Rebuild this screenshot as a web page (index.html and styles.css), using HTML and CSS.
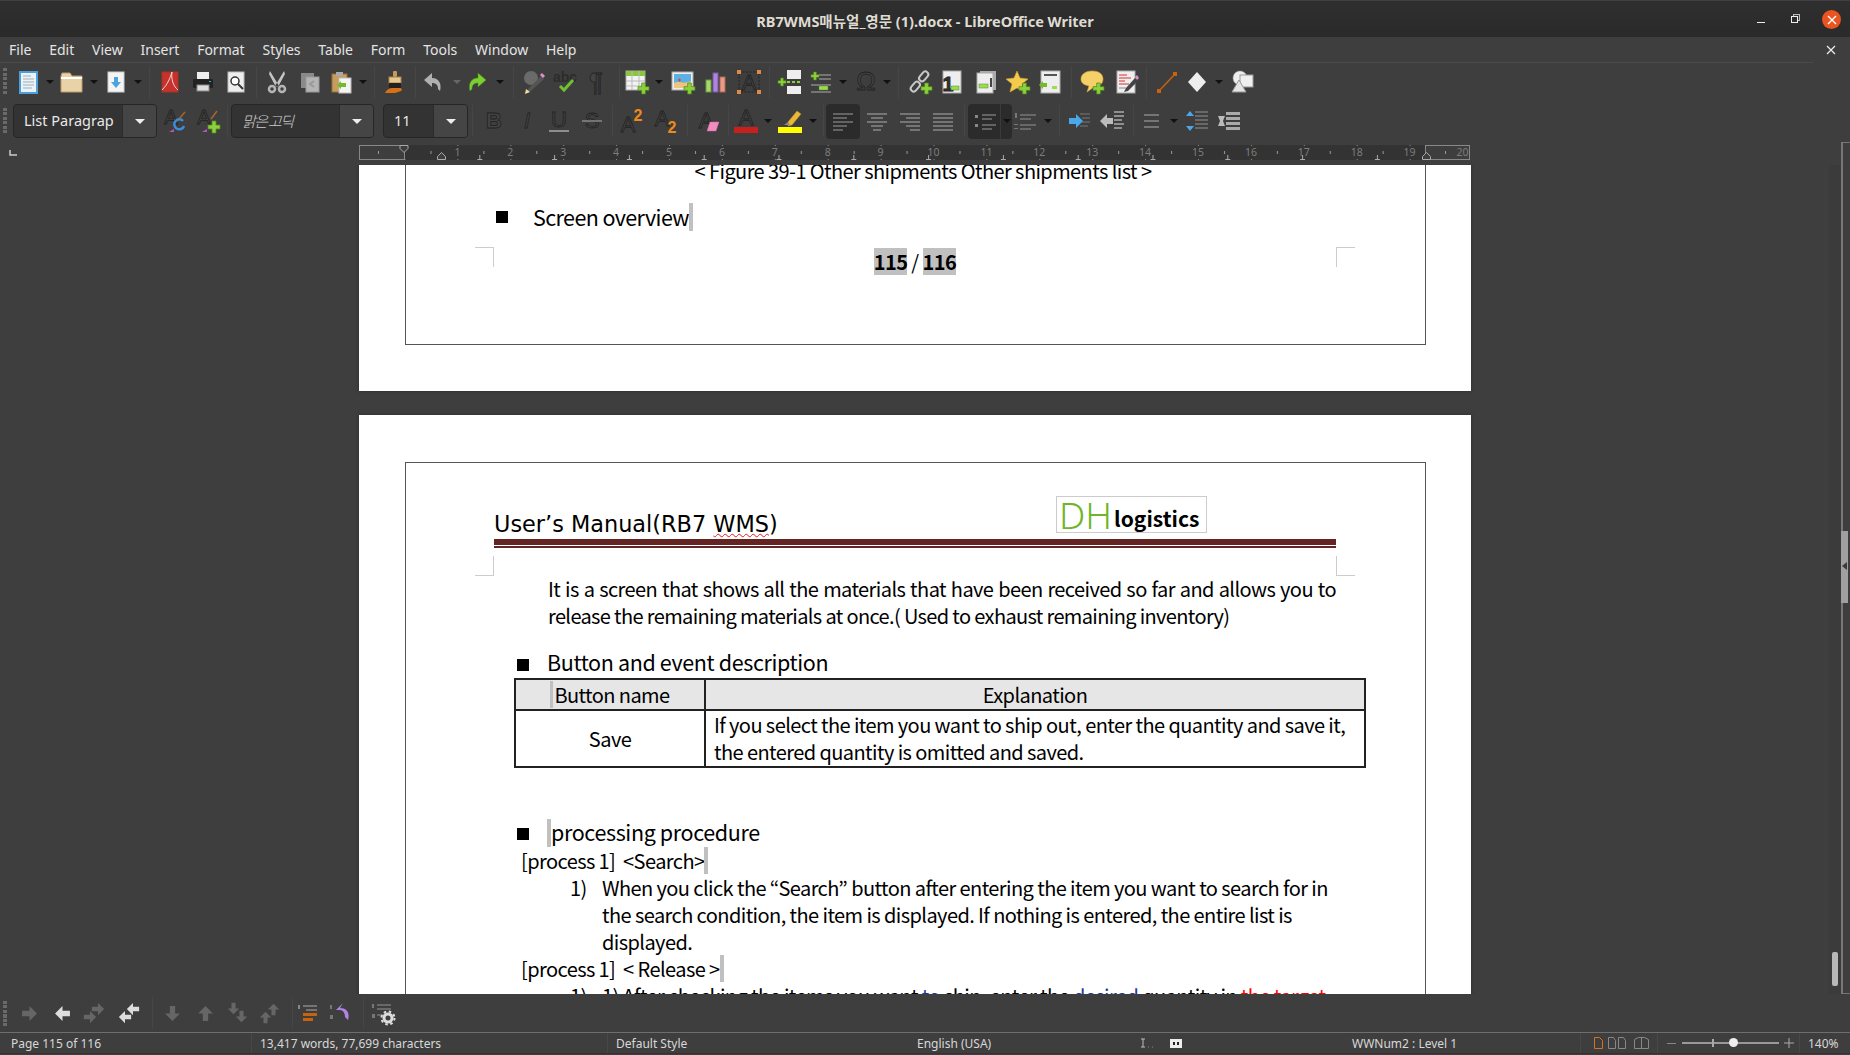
FILE: index.html
```
<!DOCTYPE html>
<html>
<head>
<meta charset="utf-8">
<title>RB7WMS매뉴얼_영문 (1).docx - LibreOffice Writer</title>
<link rel="stylesheet" href="styles.css">
</head>
<body>
<svg class="defs" width="0" height="0">
	<symbol id="plus" viewBox="0 0 12 12" overflow="visible"><path d="M4 0h4v4h4v4H8v4H4V8H0V4h4z" fill="#8cd03c" stroke="#4f8a1c" stroke-width=".8"/></symbol>
	<symbol id="arrow" viewBox="0 0 16 16"><path d="M8 1l7 7-7 7v-4.500H1v-5h7z"/></symbol>
</svg>

<div class="titlebar">
	<span class="title">RB7WMS매뉴얼_영문 (1).docx - LibreOffice Writer</span>
	<div class="winctl">
		<span class="win-min"></span>
		<span class="win-max"></span>
		<span class="win-close"><svg width="10" height="10" viewBox="0 0 10 10"><path d="M1 1l8 8M9 1l-8 8" stroke="#fff" stroke-width="1.400"/></svg></span>
	</div>
</div>

<div class="menubar">
	<div class="menus">
		<a>File</a><a>Edit</a><a>View</a><a>Insert</a><a>Format</a><a>Styles</a><a>Table</a><a>Form</a><a>Tools</a><a>Window</a><a>Help</a>
	</div>
	<svg class="menu-close" width="10" height="10" viewBox="0 0 10 10"><path d="M1 1l8 8M9 1l-8 8" stroke="#eee" stroke-width="1.200"/></svg>
</div>

<div class="toolbar row1">
	<span class="grip"></span>
	<span class="t w32"><svg class="ic" viewBox="0 0 24 24"><rect x="4" y="2" width="17" height="21" fill="#eaf3fa" stroke="#4d9fdc" stroke-width="2"/><path d="M7 6h8M7 9h11M7 12h11M7 15h11M7 18h9" stroke="#a5adb5"/></svg></span>
	<span class="dd w12"></span>
	<span class="t w32"><svg class="ic" viewBox="0 0 24 24"><path d="M1 6l1-3h8l2 3h10v16H1z" fill="#e9d2a8" stroke="#b89a68"/><path d="M1 8h21" stroke="#fff" stroke-width="2"/></svg></span>
	<span class="dd w12"></span>
	<span class="t w32"><svg class="ic" viewBox="0 0 24 24"><rect x="4" y="2" width="16" height="20" fill="#f4f4f4" stroke="#ccc"/><path d="M10 7h4v5h3l-5 6-5-6h3z" fill="#4aa3e0"/></svg></span>
	<span class="dd w12"></span>
	<span class="sep w10"></span>
	<span class="t w32"><svg class="ic" viewBox="0 0 24 24"><rect x="4" y="2" width="16" height="20" fill="#c8322c" stroke="#a32"/><path d="M14 2c-2 6-4 12-10 18M14 2c-1 7 1 14 6 18" fill="none" stroke="#f3d8d4"/></svg></span>
	<span class="t w34"><svg class="ic" viewBox="0 0 24 24"><rect x="6" y="2" width="12" height="7" fill="#eee"/><rect x="2" y="9" width="20" height="9" rx="1" fill="#222"/><rect x="6" y="15" width="12" height="6" fill="#ddd" stroke="#888"/><rect x="18" y="11" width="2" height="1" fill="#4ac"/></svg></span>
	<span class="t w32"><svg class="ic" viewBox="0 0 24 24"><rect x="4" y="2" width="16" height="20" fill="#eee" stroke="#bbb"/><circle cx="11" cy="11" r="4" fill="#fff" stroke="#333" stroke-width="1.500"/><path d="M14 14l5 5" stroke="#333" stroke-width="2"/></svg></span>
	<span class="sep w8"></span>
	<span class="t w34"><svg class="ic" viewBox="0 0 24 24"><g fill="none" stroke="#b5b5b5" stroke-width="2.500"><circle cx="7" cy="19" r="3"/><circle cx="17" cy="19" r="3"/></g><path d="M5 1l9 15-3 1L4 4zM19 1l-9 15 3 1 7-13z" fill="#c4c4c4"/></svg></span>
	<span class="t w32"><svg class="ic" viewBox="0 0 24 24"><rect x="3" y="3" width="13" height="15" fill="#8a8a8a"/><rect x="8" y="7" width="13" height="15" fill="#b4b4b4" stroke="#999"/><path d="M16 11l-4 3 4 3" fill="none" stroke="#999" stroke-width="2"/></svg></span>
	<span class="t w30"><svg class="ic" viewBox="0 0 24 24"><rect x="3" y="4" width="15" height="18" fill="#c79c5c" stroke="#96703a"/><rect x="7" y="2" width="7" height="4" fill="#aaa"/><rect x="10" y="8" width="12" height="15" fill="#f4f4f4" stroke="#bbb"/><path d="M8 15l4-4v2h5v4h-5v2z" fill="#76b82e"/></svg></span>
	<span class="dd w14"></span>
	<span class="sep w8"></span>
	<span class="t w34"><svg class="ic" viewBox="0 0 24 24"><rect x="10" y="1" width="4" height="6" rx="1" fill="#c89a58"/><rect x="6" y="7" width="12" height="6" fill="#e8c98c" stroke="#a8824a"/><rect x="6" y="13" width="12" height="5" fill="#222"/><path d="M2 23c2-4 5-5 8-5h8c1 2 1 3 0 3l-6 2z" fill="#d87014"/></svg></span>
	<span class="sep w6"></span>
	<span class="t w30"><svg class="ic" viewBox="0 0 24 24"><path d="M11 3L3 10l8 7v-4c4 0 6 2 6 6l2 2c2-7-1-13-8-13z" fill="#b0b0b0"/></svg></span>
	<span class="dd off w18"></span>
	<span class="t w22"><svg class="ic" viewBox="0 0 24 24"><path d="M13 3l8 7-8 7v-4c-4 0-6 2-6 6l-2 2C3 14 6 8 13 8z" fill="#7ccf30" stroke="#4f8a1c" stroke-width=".5"/></svg></span>
	<span class="dd w24"></span>
	<span class="sep w2"></span>
	<span class="t w40"><svg class="ic" viewBox="0 0 24 24"><circle cx="9" cy="8" r="7" fill="#6a6a6a"/><path d="M4 23l2-4L19 6l3 3L9 21z" fill="#555"/><path d="M18 5l2-2 3 3-2 2z" fill="#e090c8"/><path d="M3 24l1-5 4 3z" fill="#f0e0a0"/></svg></span>
	<span class="t w22"><svg class="ic" viewBox="0 0 24 24"><text x="12" y="12" class="abc">abc</text><path d="M7 16l4 4 9-10" fill="none" stroke="#70c030" stroke-width="3"/></svg></span>
	<span class="t w40"><svg class="ic" viewBox="0 0 24 24"><text x="12" y="21" class="glyph big">¶</text></svg></span>
	<span class="sep w6"></span>
	<span class="t w30"><svg class="ic" viewBox="0 0 24 24"><rect x="1" y="1" width="19" height="19" fill="#f2f2f2" stroke="#aaa"/><rect x="1" y="1" width="19" height="5" fill="#8cc63e"/><path d="M7 1v19M14 1v19M1 11h19M1 16h19" stroke="#bbb"/><use href="#plus" x="13" y="13" width="11" height="11"/></svg></span>
	<span class="dd w14"></span>
	<span class="t w34"><svg class="ic" viewBox="0 0 24 24"><rect x="1" y="2" width="21" height="18" fill="#eee" stroke="#aaa"/><rect x="3" y="4" width="17" height="14" fill="#5cb0e4"/><path d="M3 18v-5c5-3 8 2 17-2v7z" fill="#f0c47c"/><path d="M7 10h3M8.500 8.500v3" stroke="#e0402c"/><use href="#plus" x="13" y="13" width="11" height="11"/></svg></span>
	<span class="t w32"><svg class="ic" viewBox="0 0 24 24"><rect x="2" y="10" width="5" height="12" fill="#a5d86a" stroke="#6a9a3a"/><rect x="9" y="3" width="5" height="19" fill="#ad85de" stroke="#7a58a8"/><rect x="16" y="7" width="5" height="15" fill="#e89a84" stroke="#a86a58"/></svg></span>
	<span class="t w34"><svg class="ic" viewBox="0 0 24 24"><rect x="2" y="2" width="20" height="20" fill="none" stroke="#222" stroke-dasharray="2 1.500"/><text x="12" y="20" class="glyph">A</text><path d="M0 0h4v4H0zM20 0h4v4h-4zM0 20h4v4H0zM20 20h4v4h-4z" fill="#e08848"/></svg></span>
	<span class="sep w6"></span>
	<span class="t w36"><svg class="ic" viewBox="0 0 24 24"><rect x="9" y="0" width="14" height="9" fill="#eee"/><rect x="9" y="16" width="14" height="8" fill="#eee"/><path d="M9 12h14" stroke="#8cd03c" stroke-width="2" stroke-dasharray="3 2"/><use href="#plus" x="0" y="8" width="8" height="8"/></svg></span>
	<span class="t w26"><svg class="ic" viewBox="0 0 24 24"><path d="M10 5h12M10 9h12M2 15h20M2 22h20" stroke="#888" stroke-width="1.500"/><use href="#plus" x="2" y="2" width="8" height="8"/><rect x="10" y="16" width="9" height="4" fill="#9cdc50" stroke="#5a8a2a" stroke-width=".5"/></svg></span>
	<span class="dd w18"></span>
	<span class="t w28"><svg class="ic" viewBox="0 0 24 24"><text x="12" y="20" class="glyph big">Ω</text></svg></span>
	<span class="dd w14"></span>
	<span class="sep w8"></span>
	<span class="t w36"><svg class="ic" viewBox="0 0 24 24"><g fill="none" stroke="#c8c8c8" stroke-width="2"><rect x="13" y="1" width="6" height="11" rx="3" transform="rotate(40 16 6)"/><rect x="4" y="11" width="6" height="11" rx="3" transform="rotate(40 7 17)"/></g><use href="#plus" x="13" y="13" width="11" height="11"/></svg></span>
	<span class="t w28"><svg class="ic" viewBox="0 0 24 24"><rect x="3" y="1" width="18" height="22" fill="#eee" stroke="#aaa"/><text x="8" y="21" class="glyph num">1</text><rect x="11" y="16" width="8" height="4" fill="#9cdc50" stroke="#5a8a2a" stroke-width=".5"/></svg></span>
	<span class="t w40"><svg class="ic" viewBox="0 0 24 24"><rect x="6" y="1" width="16" height="19" fill="#aaa"/><rect x="3" y="3" width="16" height="20" fill="#eee" stroke="#aaa"/><rect x="5" y="14" width="9" height="4" fill="#9cdc50" stroke="#5a8a2a" stroke-width=".5"/><path d="M17 8v9" stroke="#444" stroke-width="2"/></svg></span>
	<span class="t w24"><svg class="ic" viewBox="0 0 24 24"><path d="M11 1l3 7 8 1-6 5 2 8-7-4-7 4 2-8-6-5 8-1z" fill="#f5cb4e" stroke="#d0a030" stroke-width=".6"/><use href="#plus" x="13" y="13" width="11" height="11"/></svg></span>
	<span class="t w40"><svg class="ic" viewBox="0 0 24 24"><rect x="3" y="1" width="19" height="22" fill="#eee" stroke="#aaa"/><path d="M6 5h13" stroke="#555" stroke-width="2"/><path d="M1 15l4-4v2h4v4H5v2z" fill="#78b830"/><rect x="14" y="16" width="5" height="3" fill="#9cdc50"/></svg></span>
	<span class="sep w2"></span>
	<span class="t w40"><svg class="ic" viewBox="0 0 24 24"><path d="M12 1c7 0 11 3 11 8s-4 8-9 8l-7 5 2-6c-5-1-8-3-8-7 0-5 5-8 11-8z" fill="#f5d068" stroke="#d8a838" stroke-width=".6"/><use href="#plus" x="13" y="13" width="11" height="11"/></svg></span>
	<span class="t w30"><svg class="ic" viewBox="0 0 24 24"><rect x="2" y="1" width="18" height="22" fill="#eee" stroke="#aaa"/><path d="M4 5h8M4 8h12M4 11h6M4 14h10" stroke="#d83030"/><path d="M4 18h7" stroke="#888"/><path d="M9 22l2-4L20 8l3 3-10 10z" fill="#444"/><path d="M20 7l2-2 2 3-2 2z" fill="#e090c8"/></svg></span>
	<span class="sep w8"></span>
	<span class="t w34"><svg class="ic" viewBox="0 0 24 24"><path d="M4 21L20 4" stroke="#c8620c" stroke-width="1.500"/><path d="M2 19h4v4H2zM18 2h4v4h-4z" fill="#c8620c"/></svg></span>
	<span class="t w26"><svg class="ic" viewBox="0 0 24 24"><path d="M12 2l9 10-9 10-9-10z" fill="#eee"/></svg></span>
	<span class="dd w18"></span>
	<span class="t w30"><svg class="ic" viewBox="0 0 24 24"><circle cx="9" cy="8" r="7" fill="#eee" stroke="#aaa" stroke-width=".5"/><rect x="9" y="5" width="13" height="12" fill="#f0f0f0" stroke="#999"/><path d="M8 10l7 12H1z" fill="#e4e4e4" stroke="#999"/></svg></span>
</div>

<div class="toolbar row2">
	<span class="grip wide"></span>
	<div class="combo c-style"><span class="combo-text">List Paragrap</span><span class="combo-arrow"></span></div>
	<span class="t w36"><svg class="ic" viewBox="0 0 24 24"><text x="8" y="15" class="glyph small">A</text><path d="M20 12a5 5 0 1 0 1 5" fill="none" stroke="#3c8cdc" stroke-width="2.500"/><path d="M16 10l6-7" stroke="#a8642c" stroke-width="1.500"/><path d="M6 23l5-3v3z" fill="#c050c0"/></svg></span>
	<span class="t w30"><svg class="ic" viewBox="0 0 24 24"><text x="8" y="15" class="glyph small">A</text><path d="M15 10l6-8" stroke="#a8642c" stroke-width="1.500"/><use href="#plus" x="12" y="12" width="12" height="12"/><path d="M6 23l5-3v3z" fill="#c050c0"/></svg></span>
	<span class="sep w8"></span>
	<div class="combo c-font"><span class="combo-text hangul">맑은 고딕</span><span class="combo-arrow"></span></div>
	<div class="combo c-size"><span class="combo-text">11</span><span class="combo-arrow"></span></div>
	<span class="sep w8"></span>
	<span class="t w36"><svg class="ic" viewBox="0 0 24 24"><text x="12" y="19" class="glyph bold">B</text></svg></span>
	<span class="t w30"><svg class="ic" viewBox="0 0 24 24"><text x="12" y="19" class="glyph italic">I</text></svg></span>
	<span class="t w34"><svg class="ic" viewBox="0 0 24 24"><text x="12" y="18" class="glyph">U</text><path d="M2 22h20" stroke="#aaa" stroke-width="1.500"/></svg></span>
	<span class="t w32"><svg class="ic" viewBox="0 0 24 24"><text x="12" y="19" class="glyph">S</text><path d="M2 12h20" stroke="#888" stroke-width="1.500"/></svg></span>
	<span class="sep w8"></span>
	<span class="t w32"><svg class="ic" viewBox="0 0 24 24"><text x="8" y="23" class="glyph">A</text><text x="18" y="12" class="orange">2</text></svg></span>
	<span class="t w36"><svg class="ic" viewBox="0 0 24 24"><text x="8" y="17" class="glyph">A</text><text x="18" y="24" class="orange">2</text></svg></span>
	<span class="sep w6"></span>
	<span class="t w36"><svg class="ic" viewBox="0 0 24 24"><text x="10" y="19" class="glyph">A</text><path d="M11 22l3-9h9l-3 9z" fill="#f08cc0" stroke="#c86898" stroke-width=".5"/></svg></span>
	<span class="sep w4"></span>
	<span class="t w32"><svg class="ic" viewBox="0 0 24 24"><text x="12" y="16" class="glyph">A</text><rect y="18" width="24" height="6" fill="#c8201c"/></svg></span>
	<span class="dd w12"></span>
	<span class="t w32"><svg class="ic" viewBox="0 0 24 24"><path d="M10 13l9-11 4 3-9 11-4 1z" fill="#e8b838" stroke="#b8902c" stroke-width=".5"/><path d="M6 16l4-3 2 3z" fill="#888"/><rect y="18" width="24" height="6" fill="#ff0"/></svg></span>
	<span class="dd w14"></span>
	<span class="sep w6"></span>
	<span class="t w34 on"><svg class="ic" viewBox="0 0 24 24"><path d="M2 5h20M2 9h14M2 13h20M2 17h14M2 21h10" stroke="#777" stroke-width="1.500"/></svg></span>
	<span class="t w34"><svg class="ic" viewBox="0 0 24 24"><path d="M2 5h20M6 9h12M2 13h20M6 17h12M8 21h8" stroke="#888" stroke-width="1.500"/></svg></span>
	<span class="t w32"><svg class="ic" viewBox="0 0 24 24"><path d="M2 5h20M8 9h14M2 13h20M8 17h14M12 21h10" stroke="#888" stroke-width="1.500"/></svg></span>
	<span class="t w34"><svg class="ic" viewBox="0 0 24 24"><path d="M2 5h20M2 9h20M2 13h20M2 17h20M2 21h20" stroke="#888" stroke-width="1.500"/></svg></span>
	<span class="sep w8"></span>
	<div class="split">
		<span class="t w32"><svg class="ic" viewBox="0 0 24 24"><path d="M10 6h14M10 10h10M10 16h14M10 20h10" stroke="#777" stroke-width="1.500"/><path d="M3 6h3v3H3zM3 15h3v3H3z" fill="#888"/></svg></span>
		<span class="dd w12"></span>
	</div>
	<span class="t w26"><svg class="ic" viewBox="0 0 24 24"><path d="M7 6h16M7 10h11M7 16h16M7 20h11" stroke="#777" stroke-width="1.500"/><path d="M2 4h2v5H2zM1 15h4v1H1zM1 19h4v1H1z" fill="#777"/></svg></span>
	<span class="dd w20"></span>
	<span class="sep w2"></span>
	<span class="t w40"><svg class="ic" viewBox="0 0 24 24"><path d="M12 5h10M14 9h8M14 13h8M12 17h8" stroke="#666" stroke-width="1.500"/><path d="M8 5l7 7-7 7v-4H1V9h7z" fill="#4aa8e8"/></svg></span>
	<span class="t w24"><svg class="ic" viewBox="0 0 24 24"><path d="M14 3h10M14 7h10M14 11h8M14 15h10M14 19h8" stroke="#aaa" stroke-width="1.500"/><path d="M7 5L0 12l7 7v-4h6V9H7z" fill="#bbb"/></svg></span>
	<span class="sep w18"></span>
	<span class="t w20"><svg class="ic" viewBox="0 0 24 24"><path d="M4 6h15M4 12h15M4 18h15" stroke="#888" stroke-width="1.500"/></svg></span>
	<span class="dd w24"></span>
	<span class="t w22"><svg class="ic" viewBox="0 0 24 24"><path d="M10 3h13M10 7h13M10 11h13M10 15h13M10 19h13" stroke="#777" stroke-width="1.500"/><path d="M5 2l4 5H1zM5 22l4-5H1z" fill="#4aa8e8"/></svg></span>
	<span class="t w44"><svg class="ic" viewBox="0 0 24 24"><path d="M8 3h14v3H8zM8 8h14v3H8zM8 13h14v3H8zM8 18h14v3H8z" fill="#aaa"/><path d="M0 7h7L5 12l2 5H0l2-5z" fill="#bbb"/></svg></span>
</div>

<div class="workspace">
	<div class="main">
		<div class="rulerrow">
			<svg class="corner" width="8" height="6" viewBox="0 0 8 6"><path d="M1 0v5h7" fill="none" stroke="#ccc" stroke-width="1.500"/></svg>
			<svg class="ruler" width="1111" height="15" viewBox="0 0 1111 15">
				<defs>
					<pattern id="cm" x="45.500" width="52.9" height="15" patternUnits="userSpaceOnUse"><rect x="26" y="6" width="1" height="3" fill="#999"/><rect y="0" width="1" height="1" fill="#888"/><rect y="14" width="1" height="1" fill="#888"/></pattern>
					<pattern id="tabs" x="43.500" width="74.8" height="15" patternUnits="userSpaceOnUse"><path d="M2.500 10v4M0 14.500h5" stroke="#aaa"/></pattern>
				</defs>
				<rect width="1111" height="15" fill="#333"/>
				<rect width="1111" height="15" fill="url(#cm)"/>
				<rect x="80" width="985" height="15" fill="url(#tabs)"/>
				<rect x=".5" y=".5" width="45" height="14" fill="#3e3e3e" stroke="#888"/>
				<rect x="1066.500" y=".5" width="44" height="14" fill="#3e3e3e" stroke="#888"/>
				<rect x="19" y="6" width="1" height="3" fill="#999"/><rect x="1086" y="6" width="1" height="3" fill="#999"/>
				<g class="rnum">
					<text x="98.400" y="11">1</text><text x="151.300" y="11">2</text><text x="204.200" y="11">3</text><text x="257.100" y="11">4</text><text x="310" y="11">5</text><text x="362.900" y="11">6</text><text x="415.800" y="11">7</text><text x="468.700" y="11">8</text><text x="521.600" y="11">9</text><text x="574.500" y="11">10</text><text x="627.400" y="11">11</text><text x="680.300" y="11">12</text><text x="733.200" y="11">13</text><text x="786.100" y="11">14</text><text x="839" y="11">15</text><text x="891.900" y="11">16</text><text x="944.800" y="11">17</text><text x="997.700" y="11">18</text><text x="1050.600" y="11">19</text><text x="1103.500" y="11">20</text>
				</g>
				<path d="M41 .5h8v3l-4 4-4-4z" fill="#3e3e3e" stroke="#aaa"/>
				<path d="M78.500 14.500v-3l4-4 4 4v3z" fill="#3e3e3e" stroke="#aaa"/>
				<path d="M1063.500 14.500v-3l4-4 4 4v3z" fill="#3e3e3e" stroke="#aaa"/>
			</svg>
		</div>
		<div class="docrow">
			<div class="doc">
				<div class="page first">
					<div class="frame">
						<p class="caption">&lt; Figure 39-1 Other shipments Other shipments list &gt;</p>
						<p class="bullet-head first-head"><span class="sq"></span>Screen overview<span class="mark"></span></p>
						<div class="pagefoot">
							<span class="cm cm-tl"></span>
							<span class="pnum"><b class="fld">115</b> / <b class="fld">116</b></span>
							<span class="cm cm-tr"></span>
						</div>
					</div>
				</div>
				<div class="page second">
					<div class="frame">
						<div class="hdr">
							<span class="hdr-title">User’s Manual(RB7 <span class="wavy">WMS</span>)</span>
							<span class="logo"><span class="logo-dh">DH</span><span class="logo-txt">logistics</span></span>
						</div>
						<div class="hdr-rule"></div>
						<div class="hdr-marks"><span class="cm cm-bl"></span><span class="cm cm-br"></span></div>
						<p class="para">It is a screen that shows all the materials that have been received so far and allows you to <span class="tight">release the remaining materials at once.( Used to exhaust remaining inventory)</span></p>
						<p class="bullet-head sub"><span class="sq"></span>Button and event description</p>
						<table class="btntable">
							<tr><th class="col1"><span class="mark-in"></span>Button name</th><th>Explanation</th></tr>
							<tr><td class="col1 center">Save</td><td class="desc"><div>If you select the item you want to ship out, enter the quantity and save it,<br>the entered quantity is omitted and saved.</div></td></tr>
						</table>
						<p class="bullet-head proc"><span class="sq"></span><span class="mark lead"></span>processing procedure</p>
						<p class="process">[process 1]&nbsp; &lt;Search&gt;<span class="mark"></span></p>
						<div class="step"><span class="stepno">1)</span><p>When you click the “Search” button after entering the item you want to search for in<br>the search condition, the item is displayed. If nothing is entered, the entire list is<br>displayed.</p></div>
						<p class="process">[process 1]&nbsp; &lt; Release &gt;<span class="mark"></span></p>
						<div class="step"><span class="stepno">1)</span><p>1) After checking the items you want <span class="blue">to</span> ship, enter the <span class="blue">desired</span> quantity in <span class="red">the target</span></p></div>
					</div>
				</div>
			</div>
			<div class="vscroll"><span class="thumb"></span></div>
		</div>
	</div>
	<div class="deck"><span class="deck-handle"></span></div>
</div>

<div class="toolbar row3">
	<span class="grip low"></span>
	<span class="t w36"><svg class="a16 dim" viewBox="0 0 16 16"><use href="#arrow"/></svg></span>
	<span class="t w30"><svg class="a16 lit flipx" viewBox="0 0 16 16"><use href="#arrow"/></svg></span>
	<span class="t w34"><svg class="ic dim" viewBox="0 0 24 24"><use href="#arrow" x="9" y="1" width="14" height="14"/><use href="#arrow" x="1" y="9" width="14" height="14"/></svg></span>
	<span class="t w36"><svg class="ic lit" viewBox="0 0 24 24"><g transform="matrix(-1 0 0 1 24 0)"><use href="#arrow" x="9" y="9" width="14" height="14"/><use href="#arrow" x="1" y="1" width="14" height="14"/></g></svg></span>
	<span class="sep w10"></span>
	<span class="t w30"><svg class="a16 dim down" viewBox="0 0 16 16"><use href="#arrow"/></svg></span>
	<span class="t w36"><svg class="a16 dim up" viewBox="0 0 16 16"><use href="#arrow"/></svg></span>
	<span class="t w28"><svg class="ic dim" viewBox="0 0 24 24"><g transform="rotate(90 12 12)"><use href="#arrow" x="1" y="9" width="13" height="13"/><use href="#arrow" x="9" y="1" width="13" height="13"/></g></svg></span>
	<span class="t w38"><svg class="ic dim" viewBox="0 0 24 24"><g transform="rotate(-90 12 12)"><use href="#arrow" x="1" y="1" width="13" height="13"/><use href="#arrow" x="9" y="9" width="13" height="13"/></g></svg></span>
	<span class="sep w6"></span>
	<span class="t w26"><svg class="ic" viewBox="0 0 24 24"><path d="M7 5h14M10 9h11" stroke="#888" stroke-width="1.500"/><path d="M7 12h14v3H7zM7 17h10v3H7z" fill="#c8620c"/><path d="M2 4h2v4H2z" fill="#888"/></svg></span>
	<span class="t w38"><svg class="ic" viewBox="0 0 24 24"><path d="M15 2l-7 7h4c3 0 5 3 5 7l3 3c2-7-1-12-8-12z" fill="#b084e4"/><path d="M2 4h2v4H2zM2 14h3v4H2z" fill="#777"/></svg></span>
	<span class="sep w8"></span>
	<span class="t w32"><svg class="ic" viewBox="0 0 24 24"><path d="M6 4h14M6 8h14M6 14h8" stroke="#777" stroke-width="1.500"/><path d="M1 3h2v4H1zM1 13h3v4H1z" fill="#777"/><circle cx="17" cy="17" r="4" fill="none" stroke="#ddd" stroke-width="3"/><circle cx="17" cy="17" r="6.500" fill="none" stroke="#ddd" stroke-width="2" stroke-dasharray="2.500 2.600"/></svg></span>
</div>

<div class="statusbar">
	<span class="cell s-page">Page 115 of 116</span>
	<span class="cell s-words">13,417 words, 77,699 characters</span>
	<span class="cell s-style">Default Style</span>
	<span class="cell s-lang">English (USA)</span>
	<span class="cell s-icons">
		<svg width="14" height="10" viewBox="0 0 14 10"><path d="M2 1v8M0 1h4M0 9h4" stroke="#bbb"/><path d="M7 9h1M11 9h1" stroke="#888"/></svg>
		<svg class="sig" width="12" height="9" viewBox="0 0 12 9"><rect width="12" height="9" fill="#eee"/><rect x="3" y="3" width="2" height="3" fill="#222"/><rect x="7" y="3" width="2" height="3" fill="#222"/></svg>
	</span>
	<span class="cell s-level">WWNum2 : Level 1</span>
	<span class="cell s-views">
		<svg width="64" height="12" viewBox="0 0 64 12"><path d="M1.500 11.500v-11h5l3 3v8z" fill="none" stroke="#d8701c"/><g fill="none" stroke="#888"><path d="M15.500 11.500v-11h5l2 3v8zM25.500 11.500v-11h5l2 3v8z"/><path d="M41.500 11.500v-9l4-2h3v11zM48.500 .5h3l4 2v9h-7z"/></g></svg>
	</span>
	<span class="cell s-zoom">
		<span class="z-minus"></span>
		<span class="z-track"><i class="z-tick"></i><i class="z-thumb"></i></span>
		<svg width="10" height="10" viewBox="0 0 10 10"><path d="M5 0v10M0 5h10" stroke="#aaa"/></svg>
	</span>
	<span class="cell s-pct">140%</span>
</div>
</body>
</html>
```
FILE: styles.css
```
html, body {
	margin: 0;
	padding: 0;
}
body {
	width: 1850px;
	height: 1055px;
	overflow: hidden;
	background: #3e3e3e;
	font-family: "Noto Sans", "Noto Sans CJK KR", sans-serif;
	color: #e6e6e6;
}
p {
	margin: 0;
}
.defs {
	position: absolute;
}

/* title + menu */
.titlebar {
	height: 36px;
	border-top: 1px solid #404040;
	background: linear-gradient(#2f2f2f, #2a2a2a);
	display: flex;
	align-items: center;
	justify-content: center;
	position: relative;
}
.title {
	font-size: 14.500px;
	font-weight: 700;
	color: #dfdbd2;
	padding-top: 3px;
}
.winctl {
	position: absolute;
	right: 9px;
	top: 9px;
	display: flex;
	align-items: center;
}
.win-min {
	width: 8px;
	height: 1px;
	margin-top: 5px;
	background: #eee;
	margin-right: 26px;
}
.win-max {
	width: 5px;
	height: 5px;
	border: 1px solid #eee;
	margin-right: 24px;
	box-shadow: 2px -2px 0 -1px #3a3a3a, 2px -2px 0 0 #bbb;
}
.win-close {
	width: 19px;
	height: 19px;
	border-radius: 50%;
	background: #e95420;
	display: flex;
	align-items: center;
	justify-content: center;
}
.menubar {
	height: 26px;
	display: flex;
	align-items: center;
	position: relative;
}
.menus {
	flex: 1;
	height: 25px;
	margin-right: 37px;
	padding-left: 9px;
	border-bottom: 1px solid #4a4a4a;
	display: flex;
	align-items: center;
	gap: 17.800px;
	font-size: 14px;
	color: #e4e4e4;
}
.menu-close {
	position: absolute;
	right: 14px;
	top: 8px;
}

/* toolbars */
.toolbar {
	display: flex;
	align-items: center;
}
.row1 {
	height: 37px;
	padding-bottom: 1px;
}
.row2 {
	height: 40px;
}
.row3 {
	border-bottom: 1px solid #6e6e6e;
	height: 38px;
}
.grip {
	flex: none;
	width: 4px;
	height: 27px;
	margin: 0 5px 0 3px;
	background: repeating-linear-gradient(#6a6a6a 0 3px, transparent 3px 4.500px);
}
.grip.wide {
	margin-right: 6px;
}
.grip.low {
	height: 25px;
	margin-right: 4px;
}
.t, .dd, .sep {
	flex: none;
	height: 34px;
	display: flex;
	align-items: center;
	justify-content: center;
}
.ic {
	flex: none;
	width: 24px;
	height: 24px;
	overflow: visible;
}
.a16 {
	flex: none;
	width: 17px;
	height: 17px;
}
.w2 { width: 2px; }
.w4 { width: 4px; }
.w6 { width: 6px; }
.w8 { width: 8px; }
.w10 { width: 10px; }
.w12 { width: 12px; }
.w14 { width: 14px; }
.w18 { width: 18px; }
.w20 { width: 20px; }
.w22 { width: 22px; }
.w24 { width: 24px; }
.w26 { width: 26px; }
.w28 { width: 28px; }
.w30 { width: 30px; }
.w32 { width: 32px; }
.w34 { width: 34px; }
.w36 { width: 36px; }
.w38 { width: 38px; }
.w40 { width: 40px; }
.w44 { width: 44px; }
.dd::after {
	content: "";
	border-left: 4px solid transparent;
	border-right: 4px solid transparent;
	border-top: 4px solid #111;
}
.dd.off::after {
	border-top-color: #666;
}
.sep::after {
	content: "";
	width: 1px;
	height: 32px;
	background: #464646;
}
.on {
	background: #2b2b2b;
	border-radius: 4px;
	height: 35px;
}
.split {
	display: flex;
	background: #2b2b2b;
	border-radius: 4px;
	height: 35px;
	align-items: center;
}
.split .dd {
	height: 35px;
	border-left: 1px solid #3a3a3a;
	box-sizing: border-box;
}

/* svg glyphs */
.glyph {
	font-family: "Liberation Sans", sans-serif;
	font-size: 22px;
	text-anchor: middle;
	fill: #444;
	stroke: #222;
	stroke-width: .8px;
}
.glyph.big {
	font-size: 26px;
}
.glyph.small {
	font-size: 20px;
}
.glyph.num {
	font-size: 20px;
	font-weight: 700;
	fill: #333;
}
.glyph.bold {
	font-weight: 700;
}
.glyph.italic {
	font-style: italic;
}
.abc {
	font-family: "Liberation Sans", sans-serif;
	font-size: 14px;
	font-weight: 700;
	text-anchor: middle;
	fill: #2c2c2c;
}
.orange {
	font-family: "Liberation Sans", sans-serif;
	font-size: 16px;
	font-weight: 700;
	text-anchor: middle;
	fill: #ef8a1c;
}
.dim {
	fill: #666;
}
.lit {
	fill: #ddd;
}
.flipx {
	transform: scaleX(-1);
}
.down {
	transform: rotate(90deg);
}
.up {
	transform: rotate(-90deg);
}

/* combos */
.combo {
	flex: none;
	box-sizing: border-box;
	height: 34px;
	display: flex;
	background: #333;
	border: 1px solid #262626;
	border-radius: 4px;
	overflow: hidden;
}
.combo-text {
	flex: 1;
	display: flex;
	align-items: center;
	padding: 0 0 2px 10px;
	font-size: 14.500px;
	color: #e8e8e8;
}
.combo-arrow {
	width: 33px;
	background: #454545;
	border-left: 1px solid #2c2c2c;
	display: flex;
	align-items: center;
	justify-content: center;
}
.combo-arrow::after {
	content: "";
	border-left: 5px solid transparent;
	border-right: 5px solid transparent;
	border-top: 5px solid #eee;
}
.c-style {
	width: 144px;
}
.c-font {
	width: 143px;
}
.c-font .combo-text {
	padding-left: 10px;
}
.c-size {
	width: 85px;
	margin-left: 9px;
}
.hangul {
	font-family: "Noto Sans CJK KR", sans-serif;
	font-style: italic;
	font-weight: 300;
	font-size: 15px;
	letter-spacing: -1.600px;
	color: #ccc;
}

/* workspace */
.workspace {
	height: 853px;
	display: flex;
}
.main {
	flex: 1;
	min-width: 0;
	display: flex;
	flex-direction: column;
}
.rulerrow {
	height: 24px;
	position: relative;
	padding: 4px 0 0 359px;
	box-sizing: border-box;
	flex: none;
}
.corner {
	position: absolute;
	left: 9px;
	top: 9px;
}
.ruler {
	display: block;
}
.rnum text {
	font-family: "Noto Sans", sans-serif;
	font-size: 10.500px;
	fill: #7d7d7d;
	text-anchor: middle;
}
.docrow {
	flex: 1;
	display: flex;
	min-height: 0;
	overflow: hidden;
}
.doc {
	flex: 1;
	padding-left: 359px;
	overflow: hidden;
}
.vscroll {
	flex: none;
	width: 12px;
	background: #3b3b3b;
	position: relative;
}
.thumb {
	position: absolute;
	left: 3px;
	top: 787px;
	width: 6px;
	height: 34px;
	border-radius: 2px;
	background: #b8b8b8;
}
.deck {
	flex: none;
	width: 9px;
	margin-top: 1px;
	height: 852px;
	box-sizing: border-box;
	border-left: 2px solid #777;
	border-top: 1px solid #777;
	border-bottom: 1px solid #777;
	position: relative;
}
.deck-handle {
	position: absolute;
	left: -2px;
	top: 388px;
	width: 7px;
	height: 72px;
	background: #a0a0a0;
}
.deck-handle::after {
	content: "";
	position: absolute;
	left: 1px;
	top: 31px;
	border-top: 4px solid transparent;
	border-bottom: 4px solid transparent;
	border-right: 5px solid #3a3a3a;
}

/* pages */
.page {
	width: 1112px;
	background: #fff;
	color: #000;
	box-shadow: 0 0 3px #2a2a2a;
	font-family: "Noto Sans CJK KR", sans-serif;
	font-size: 20px;
	letter-spacing: -.58px;
	box-sizing: border-box;
	padding-left: 46px;
}
.page.first {
	height: 226px;
	margin-bottom: 24px;
	overflow: hidden;
}
.page.second {
	padding-top: 47px;
	height: 700px;
}
.frame {
	width: 1021px;
	box-sizing: border-box;
	border: 1px solid #555;
	padding-left: 88px;
	padding-right: 89px;
}
.first .frame {
	border-top: 0;
	height: 180px;
	display: flow-root;
}
.second .frame {
	height: 700px;
}
.caption {
	margin: -8px 0 0 0;
	line-height: 27px;
	padding-left: 16px;
	text-align: center;
}
.bullet-head {
	height: 28px;
	line-height: 28px;
	font-size: 21.500px;
	letter-spacing: -.37px;
	display: flex;
	align-items: center;
	white-space: pre;
}
.first-head {
	margin-top: 19px;
	letter-spacing: -.6px;
}
.sq {
	flex: none;
	width: 12px;
	height: 12px;
	background: #000;
}
.first-head .sq {
	margin: 0 25px 0 2px;
}
.sub .sq {
	margin: 6px 18px 0 23px;
}
.proc .sq {
	margin: 4px 18px 0 23px;
}
.sub {
	margin: 19px 0 2px;
}
.proc {
	margin: 50px 0 1px;
}
.mark {
	display: inline-block;
	width: 4px;
	height: 28px;
	background: #c0c0c0;
	vertical-align: middle;
}
.proc .mark {
	margin-top: 2px;
}
.pagefoot {
	display: flex;
	justify-content: space-between;
	align-items: flex-start;
	margin-top: 16px;
}
.pnum {
	line-height: 27px;
	margin-top: 1px;
}
.fld {
	background: #c0c0c0;
	display: inline-block;
}
.cm {
	flex: none;
	box-sizing: border-box;
	width: 19px;
	height: 20px;
}
.cm-tl {
	margin-left: -19px;
	border-top: 1px solid #ccc;
	border-right: 1px solid #ccc;
}
.cm-tr {
	margin-right: -19px;
	border-top: 1px solid #ccc;
	border-left: 1px solid #ccc;
}
.cm-bl {
	margin-left: -19px;
	border-bottom: 1px solid #ccc;
	border-right: 1px solid #ccc;
}
.cm-br {
	margin-right: -19px;
	border-bottom: 1px solid #ccc;
	border-left: 1px solid #ccc;
}
.hdr {
	height: 76px;
	display: flex;
	align-items: flex-end;
	letter-spacing: 0;
}
.hdr-title {
	font-family: "DejaVu Sans", sans-serif;
	font-size: 22.400px;
	line-height: 26px;
	margin-bottom: 2px;
}
.wavy {
	text-decoration: underline wavy #e02020 1px;
}
.logo {
	margin: 0 129px 6px auto;
	width: 151px;
	height: 37px;
	box-sizing: border-box;
	border: 1px solid #ccc;
	display: flex;
	align-items: flex-end;
	padding-left: 2px;
}
.logo-dh {
	font-family: "Noto Sans", sans-serif;
	font-weight: 300;
	font-size: 37px;
	line-height: 34px;
	color: #6fb52c;
}
.logo-txt {
	font-family: "Noto Sans CJK KR", sans-serif;
	font-weight: 700;
	font-size: 21px;
	line-height: 28px;
	margin-left: 2px;
}
.hdr-rule {
	height: 1px;
	border-top: 6px solid #632523;
	border-bottom: 2px solid #632523;
}
.hdr-marks {
	display: flex;
	justify-content: space-between;
	align-items: flex-end;
	height: 28px;
}
.para {
	margin: -1px 0 0 54px;
	line-height: 27px;
	text-align: justify;
}
.tight {
	letter-spacing: -.64px;
}
.btntable {
	margin-left: 20px;
	width: 852px;
	border-collapse: collapse;
	table-layout: fixed;
	font-size: 20px;
	line-height: 27px;
}
.btntable th, .btntable td {
	border: 2px solid #222;
	font-weight: 400;
}
.btntable th {
	height: 28px;
	background: #e6e6e6;
	text-align: center;
	padding: 0 0 1px;
}
.btntable td {
	height: 54px;
	padding: 0 0 1px 8px;
	white-space: nowrap;
}
.btntable .col1 {
	width: 188px;
}
.btntable .center {
	text-align: center;
	padding: 0 0 1px;
}
.btntable .desc {
	vertical-align: top;
}
.mark-in {
	display: inline-block;
	width: 3px;
	height: 27px;
	background: #c0c0c0;
	vertical-align: top;
	margin-right: 1px;
}
.process {
	line-height: 27px;
	margin-left: 27px;
	white-space: pre;
}
.process .mark {
	height: 27px;
	vertical-align: top;
}
.step {
	display: flex;
	line-height: 27px;
	margin-left: 76px;
	white-space: nowrap;
}
.stepno {
	width: 32px;
	flex: none;
}
.red {
	color: #f00;
}
.blue {
	color: #1f3a93;
}

/* status */
.statusbar {
	height: 21px;
	display: flex;
	font-size: 12px;
	color: #d8d8d8;
	border-bottom: 1px solid #333;
	box-sizing: border-box;
}
.cell {
	flex: none;
	box-sizing: border-box;
	display: flex;
	align-items: center;
	white-space: nowrap;
	border-right: 1px solid #484848;
}
.s-page {
	width: 252px;
	padding-left: 11px;
}
.s-words {
	width: 356px;
	padding-left: 8px;
}
.s-style {
	width: 301px;
	padding-left: 8px;
	border-right: 0;
}
.s-lang {
	width: 225px;
	padding-left: 8px;
	border-right: 0;
}
.s-icons {
	width: 218px;
	padding-left: 7px;
	border-right: 0;
}
.s-icons .sig {
	margin-left: 15px;
}
.s-level {
	width: 229px;
}
.s-views {
	width: 77px;
	padding-left: 12px;
}
.s-zoom {
	width: 142px;
	padding-left: 9px;
}
.z-minus {
	width: 9px;
	height: 1px;
	background: #888;
	margin-right: 6px;
}
.z-track {
	width: 97px;
	height: 2px;
	background: #999;
	position: relative;
	margin-right: 5px;
}
.z-tick {
	position: absolute;
	left: 30px;
	top: -3px;
	width: 2px;
	height: 8px;
	background: #aaa;
}
.z-thumb {
	position: absolute;
	left: 47px;
	top: -4px;
	width: 9px;
	height: 9px;
	border-radius: 50%;
	background: #eee;
}
.s-pct {
	padding-left: 8px;
	border-right: 0;
}
```
